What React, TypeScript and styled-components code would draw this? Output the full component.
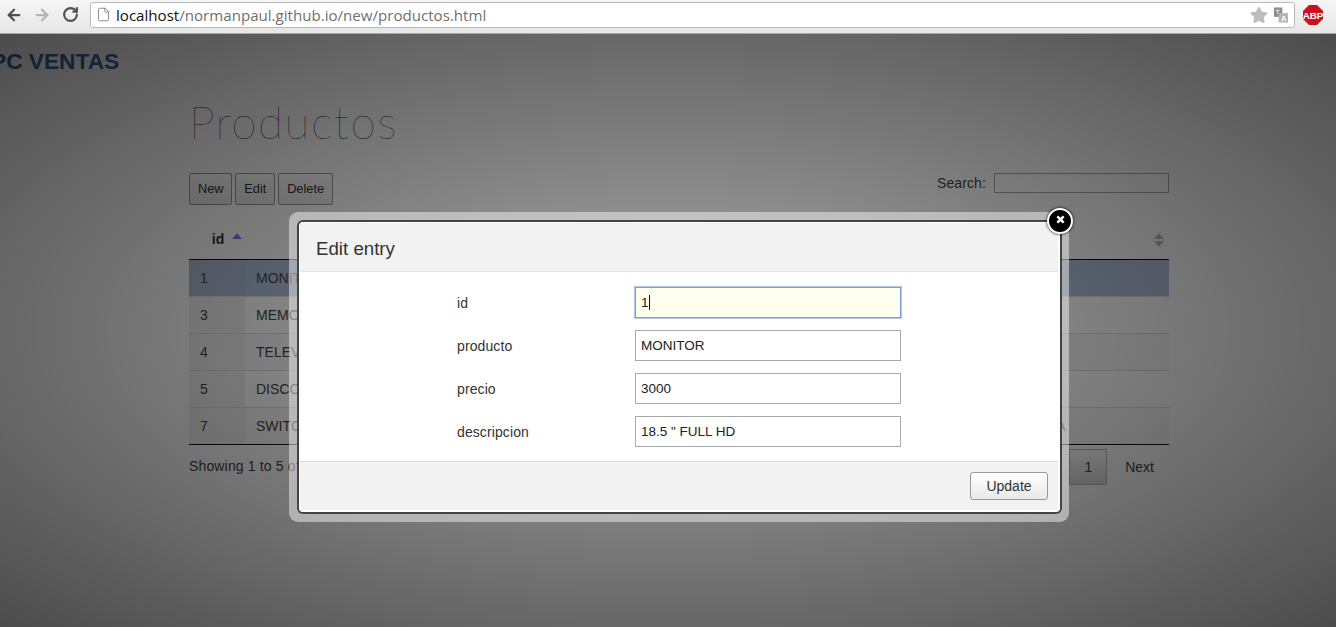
import React from 'react'
import { ArrowLeft, ArrowRight, File, RotateCw } from 'lucide-react'
import { FaStar } from 'react-icons/fa'
import styled, { createGlobalStyle } from 'styled-components'

const GlobalStyle = createGlobalStyle`
  html, body {
    height: 100%;
    margin: 0;
    overflow: hidden;
  }
  body {
    background: #fff;
    color: #333;
    font-family: 'Liberation Sans', Arial, sans-serif;
    font-size: 14px;
  }
`

const Toolbar = styled.header`
  align-items: center;
  background: linear-gradient(#f6f6f6, #e6e6e6);
  border-bottom: 1px solid #a9a9a9;
  box-sizing: border-box;
  display: flex;
  height: 34px;
  padding: 0 13px 4px 0;
`

const NavButton = styled.span<{ $off?: boolean }>`
  align-items: center;
  color: ${({ $off }) => ($off ? '#b4b4b4' : '#505050')};
  display: flex;
  justify-content: center;
  width: 28px;
`

const Omnibox = styled.div`
  align-items: center;
  background: #fff;
  border: 1px solid #b9b9b9;
  border-radius: 3px;
  box-sizing: border-box;
  display: flex;
  flex: 1;
  height: 26px;
  margin: 0 8px 0 6px;
  padding: 0 6px 0 5px;
`

const PageGlyph = styled(File)`
  color: #888;
  flex: none;
  margin-right: 5px;
`

const Url = styled.span`
  color: #6f6f6f;
  flex: 1;
  font-family: 'Open Sans', sans-serif;
  font-size: 15.1px;

  b {
    color: #111;
    font-weight: 400;
  }
`

const Star = styled(FaStar)`
  color: #bdbdbd;
  font-size: 18px;
  margin-right: 5px;
`

const Translate = styled.svg`
  flex: none;
`

const AdBlock = styled.svg`
  flex: none;
`

const Page = styled.main`
  height: 593px;
  overflow: hidden;
  position: relative;
`

const Brand = styled.div`
  color: #3368a8;
  font-size: 22.7px;
  font-weight: 700;
  line-height: 26px;
  margin-left: -9px;
  padding-top: 14px;
`

const Content = styled.section`
  margin: 0 167px 0 189px;
`

const Title = styled.h1`
  color: #2a2a2a;
  font-family: Lato, sans-serif;
  font-size: 46px;
  font-weight: 100;
  letter-spacing: 1.45px;
  line-height: 56px;
  margin: 20px 0 23px;
`

const Controls = styled.div`
  align-items: flex-start;
  display: flex;
  justify-content: space-between;
  height: 48px;
`

const Buttons = styled.div`
  display: flex;
  gap: 3px;
`

const ToolButton = styled.button`
  background: linear-gradient(#fff, #e9e9e9);
  border: 1px solid #999;
  border-radius: 2px;
  color: #333;
  font: 12.8px/20px 'Liberation Sans', Arial, sans-serif;
  height: 32px;
  padding: 0 7.9px;
`

const Search = styled.label`
  align-items: center;
  color: #444;
  display: flex;
  gap: 8px;
  letter-spacing: 0.1px;
`

const SearchInput = styled.span`
  background: #fff;
  border: 1px solid #aaa;
  box-sizing: border-box;
  display: block;
  height: 20px;
  width: 175px;
`

const Table = styled.table`
  border-collapse: separate;
  border-spacing: 0;
  table-layout: fixed;
  width: 980px;
`

const HeadCell = styled.th<{ $width: number }>`
  border-bottom: 1px solid #111;
  box-sizing: border-box;
  font-size: 14px;
  height: 39px;
  padding: 0 0 2px 2px;
  position: relative;
  text-align: center;
  width: ${({ $width }) => $width}px;
`

const SortUp = styled.i<{ $active?: boolean }>`
  border-bottom: 6px solid ${({ $active }) => ($active ? '#7a7ee8' : '#bbb')};
  border-left: 5px solid transparent;
  border-right: 5px solid transparent;
  position: absolute;
  right: ${({ $active }) => ($active ? 3 : 5)}px;
  top: 12px;
`

const SortDown = styled.i`
  border-left: 5px solid transparent;
  border-right: 5px solid transparent;
  border-top: 6px solid #bbb;
  position: absolute;
  right: 5px;
  top: 20px;
`

const Row = styled.tr<{ $selected?: boolean; $odd?: boolean }>`
  background: ${({ $selected, $odd }) =>
    $selected ? '#b0bed9' : $odd ? '#f9f9f9' : '#fff'};
`

const Cell = styled.td<{ $sorted?: boolean; $selected?: boolean; $last?: boolean }>`
  background: ${({ $sorted, $selected }) =>
    !$sorted ? 'transparent' : $selected ? '#acbad4' : '#f1f1f1'};
  border-bottom: 1px solid ${({ $last }) => ($last ? '#111' : '#ddd')};
  box-sizing: border-box;
  color: #444;
  height: 37px;
  padding: 0 11px;
  white-space: nowrap;
`

const TableFooter = styled.div`
  align-items: flex-start;
  display: flex;
  justify-content: space-between;
  padding-top: 4px;
`

const Info = styled.span`
  color: #444;
  letter-spacing: 0.15px;
  line-height: 36px;
  margin-top: -1px;
`

const Pager = styled.nav`
  align-items: center;
  display: flex;
  gap: 3px;
`

const PageLink = styled.span<{ $current?: boolean }>`
  background: ${({ $current }) =>
    $current ? 'linear-gradient(#fff, #dcdcdc)' : 'none'};
  border: 1px solid ${({ $current }) => ($current ? '#bbb' : 'transparent')};
  box-sizing: border-box;
  color: #444;
  height: 36px;
  line-height: 34px;
  padding: 0 14px;
`

const Overlay = styled.div`
  background: radial-gradient(
    ellipse farthest-corner at center,
    rgba(0, 0, 0, 0.34) 0%,
    rgba(0, 0, 0, 0.7) 100%
  );
  inset: 0;
  position: absolute;
`

const Frame = styled.div`
  background: rgba(255, 255, 255, 0.45);
  border-radius: 9px;
  box-sizing: border-box;
  left: 289px;
  padding: 8px;
  position: absolute;
  top: 178px;
  width: 780px;
`

const Dialog = styled.div`
  background: #fff;
  border-color: #fff;
  border-radius: 4px;
  border-style: solid;
  border-width: 1px 2px 2px 1px;
  box-shadow: 0 0 0 2px #444;
  box-sizing: border-box;
  display: flex;
  flex-direction: column;
  height: 290px;
  margin: 2px 1px 2px 2px;
`

const DialogHeader = styled.div`
  background: #f2f2f2;
  border-bottom: 1px solid #e3e3e3;
  box-sizing: border-box;
  color: #333;
  font-size: 18.7px;
  height: 49px;
  line-height: 52px;
  padding-left: 16px;
`

const DialogBody = styled.form`
  align-content: start;
  display: grid;
  flex: 1;
  grid-template-columns: 178px 266px;
  padding: 15px 0 0 157px;
  row-gap: 12px;
`

const FieldLabel = styled.label`
  align-self: center;
  color: #333;
  letter-spacing: 0.1px;
`

const Field = styled.div<{ $focus?: boolean }>`
  background: ${({ $focus }) => ($focus ? '#ffffee' : '#fff')};
  border: 1px solid ${({ $focus }) => ($focus ? '#7f9fdc' : '#aaa')};
  box-shadow: ${({ $focus }) => ($focus ? '0 0 0 1px rgba(120, 150, 215, 0.55)' : 'none')};
  box-sizing: border-box;
  color: #222;
  font-size: 13.5px;
  height: 31px;
  line-height: 29px;
  padding-left: 5px;
`

const Caret = styled.i`
  border-left: 1px solid #111;
  display: inline-block;
  height: 15px;
  vertical-align: -3px;
`

const DialogFooter = styled.div`
  background: #f2f2f2;
  border-top: 1px solid #ddd;
  box-sizing: border-box;
  display: flex;
  height: 49px;
  justify-content: flex-end;
  padding: 10px 10px 0 0;
`

const UpdateButton = styled.button`
  background: linear-gradient(#fff, #e9e9e9);
  border: 1px solid #999;
  border-radius: 3px;
  color: #333;
  font: 14px 'Liberation Sans', Arial, sans-serif;
  height: 28px;
  width: 78px;
`

const CloseButton = styled.span`
  align-items: center;
  background: #000;
  border: 2px solid #fff;
  border-radius: 50%;
  box-shadow: 0 0 3px #000;
  box-sizing: border-box;
  display: flex;
  height: 26px;
  justify-content: center;
  left: 1047px;
  padding-bottom: 3px;
  position: absolute;
  top: 174px;
  width: 26px;
`

const rows = [
  { id: 1, producto: 'MONITOR', precio: '3000', descripcion: '18.5 " FULL HD', selected: true },
  { id: 3, producto: 'MEMORIA', precio: '800', descripcion: 'DDR3 4GB' },
  { id: 4, producto: 'TELEVISOR', precio: '5000', descripcion: 'LED 32 "' },
  { id: 5, producto: 'DISCO', precio: '1200', descripcion: 'SATA 1TB' },
  { id: 7, producto: 'SWITCH', precio: '900', descripcion: '8 PUERTOS RED LOCAL DE OFICINA' },
]

const fields = [
  { name: 'id', value: '1', focus: true },
  { name: 'producto', value: 'MONITOR' },
  { name: 'precio', value: '3000' },
  { name: 'descripcion', value: '18.5 " FULL HD' },
]

export default function App() {
  return (
    <>
      <GlobalStyle />
      <Toolbar>
        <NavButton>
          <ArrowLeft size={18} strokeWidth={3} />
        </NavButton>
        <NavButton $off>
          <ArrowRight size={18} strokeWidth={3} />
        </NavButton>
        <NavButton>
          <RotateCw size={17} strokeWidth={3} />
        </NavButton>
        <Omnibox>
          <PageGlyph size={15} strokeWidth={1.5} />
          <Url>
            <b>localhost</b>/normanpaul.github.io/new/productos.html
          </Url>
          <Star />
          <Translate width="15" height="16" viewBox="0 0 16 16">
            <rect x="1" y="0" width="9" height="10" fill="#8c8c8c" />
            <rect x="6" y="6" width="10" height="10" fill="#b5b5b5" />
            <text x="8.5" y="14" fontSize="8" fontWeight="700" fill="#fff" fontFamily="Liberation Sans">
              A
            </text>
            <path d="M3 3h4M5 3v4M1 12l3 3" stroke="#eee" strokeWidth="1" fill="none" />
          </Translate>
        </Omnibox>
        <AdBlock width="20" height="20" viewBox="0 0 20 20">
          <path d="M6 0h8l6 6v8l-6 6H6l-6-6V6z" fill="#c8141f" />
          <text x="10" y="13.5" fontSize="9.8" fontWeight="700" fill="#fff" textAnchor="middle" fontFamily="Liberation Sans">
            ABP
          </text>
        </AdBlock>
      </Toolbar>
      <Page>
        <Brand>PC VENTAS</Brand>
        <Content>
          <Title>Productos</Title>
          <Controls>
            <Buttons>
              <ToolButton>New</ToolButton>
              <ToolButton>Edit</ToolButton>
              <ToolButton>Delete</ToolButton>
            </Buttons>
            <Search>
              Search:
              <SearchInput />
            </Search>
          </Controls>
          <Table>
            <thead>
              <tr>
                <HeadCell $width={56}>
                  id
                  <SortUp $active />
                </HeadCell>
                <HeadCell $width={300}>producto</HeadCell>
                <HeadCell $width={264}>precio</HeadCell>
                <HeadCell $width={360}>
                  descripcion
                  <SortUp />
                  <SortDown />
                </HeadCell>
              </tr>
            </thead>
            <tbody>
              {rows.map((row, i) => (
                <Row key={row.id} $selected={row.selected} $odd={i % 2 === 0}>
                  <Cell $sorted $selected={row.selected} $last={i === rows.length - 1}>
                    {row.id}
                  </Cell>
                  <Cell $last={i === rows.length - 1}>{row.producto}</Cell>
                  <Cell $last={i === rows.length - 1}>{row.precio}</Cell>
                  <Cell $last={i === rows.length - 1}>{row.descripcion}</Cell>
                </Row>
              ))}
            </tbody>
          </Table>
          <TableFooter>
            <Info>Showing 1 to 5 of 5 entries</Info>
            <Pager>
              <PageLink>Previous</PageLink>
              <PageLink $current>1</PageLink>
              <PageLink>Next</PageLink>
            </Pager>
          </TableFooter>
        </Content>
        <Overlay />
        <Frame>
          <Dialog>
            <DialogHeader>Edit entry</DialogHeader>
            <DialogBody>
              {fields.map((field) => (
                <React.Fragment key={field.name}>
                  <FieldLabel>{field.name}</FieldLabel>
                  <Field $focus={field.focus}>
                    {field.value}
                    {field.focus && <Caret />}
                  </Field>
                </React.Fragment>
              ))}
            </DialogBody>
            <DialogFooter>
              <UpdateButton type="button">Update</UpdateButton>
            </DialogFooter>
          </Dialog>
        </Frame>
        <CloseButton>
          <svg width="9" height="9" viewBox="0 0 10 10">
            <path d="M1.5 1.5l7 7M8.5 1.5l-7 7" stroke="#fff" strokeWidth="2.8" />
          </svg>
        </CloseButton>
      </Page>
    </>
  )
}
